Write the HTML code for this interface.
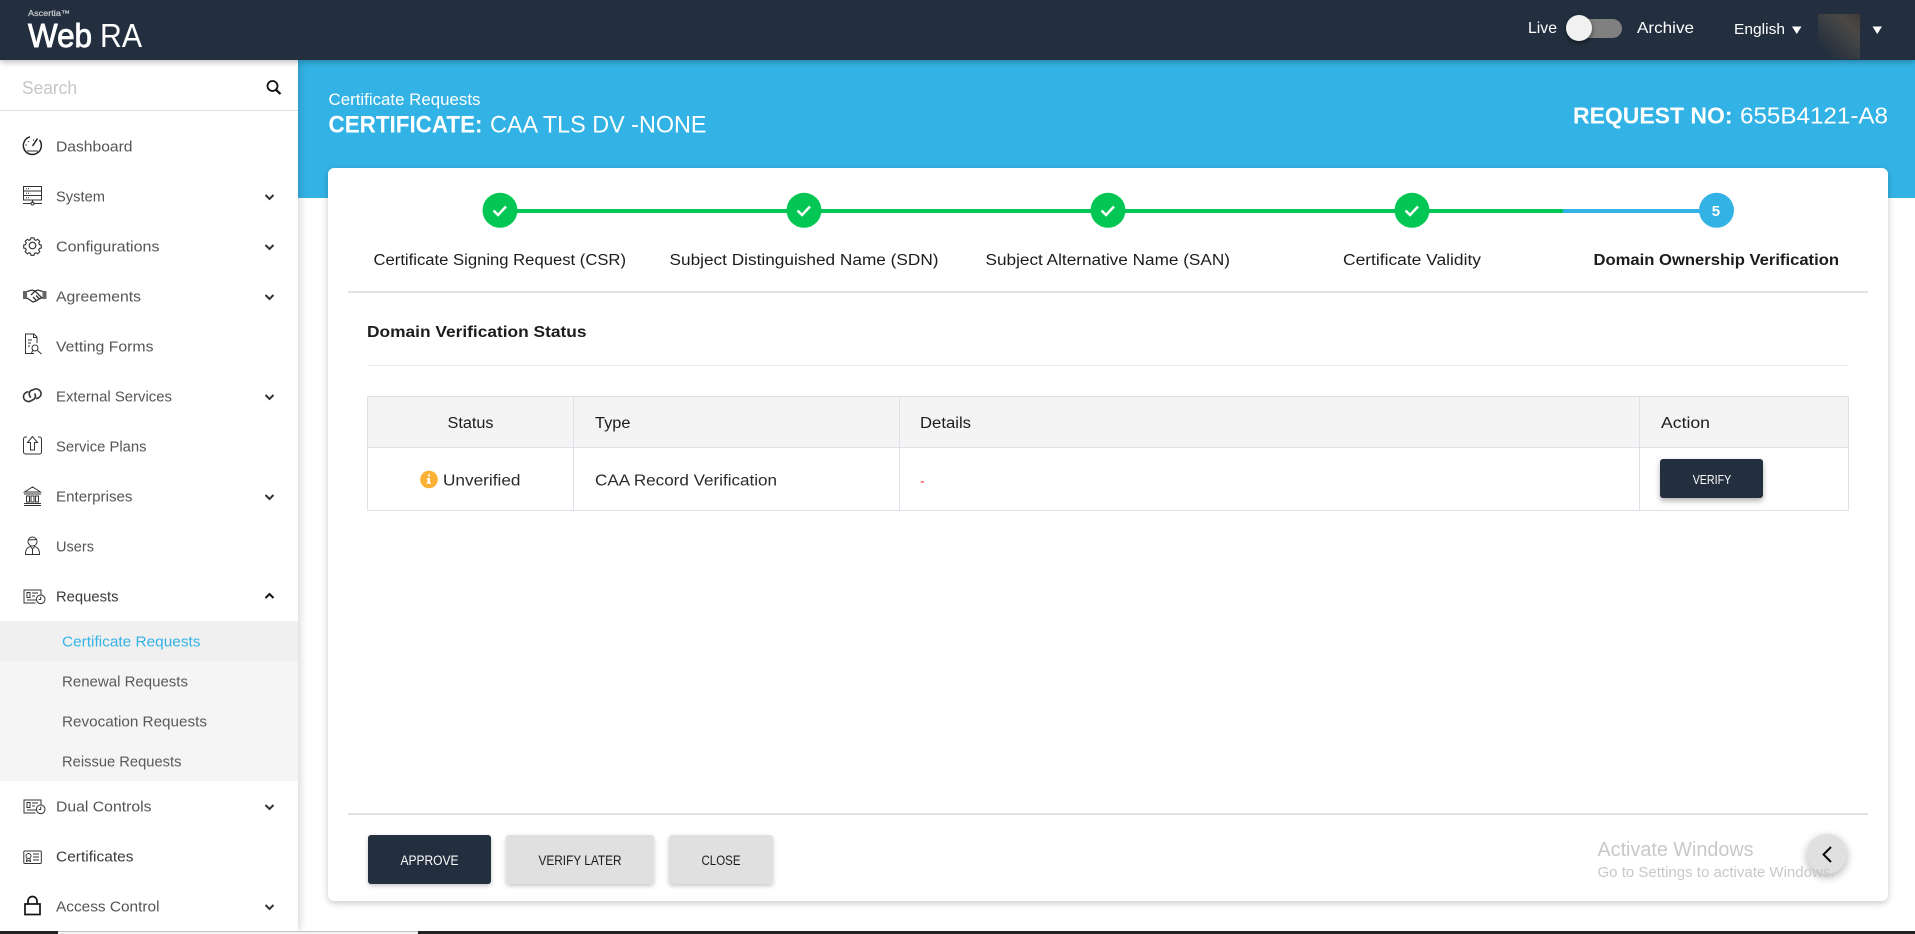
<!DOCTYPE html>
<html><head><meta charset="utf-8"><title>WebRA</title>
<style>
html,body{margin:0;padding:0;width:1915px;height:934px;overflow:hidden;background:#fff}
body{position:relative;font-family:"Liberation Sans",sans-serif}
.b{position:absolute}
svg{position:absolute;left:0;top:0}
text{font-family:"Liberation Sans",sans-serif}
.m{font-size:14.500px;fill:#555}
.s{font-size:14.500px;fill:#5a5a5a}
.w{fill:#fff}
.k{fill:#1c1c1c;font-size:15.500px}
.ic{fill:none;stroke:#333;stroke-width:1}
.ch{fill:none;stroke:#333;stroke-width:2}
</style></head><body>
<div class="b" style="left:298px;top:60px;width:1617px;height:138px;background:#33b3e5"></div>
<div class="b" style="left:0;top:60px;width:298px;height:871px;background:#fff;box-shadow:2px 0 8px rgba(0,0,0,.16)"></div>
<div class="b" style="left:0;top:0;width:1915px;height:60px;background:#232f3e;box-shadow:0 2px 6px rgba(0,0,0,.28)"></div>
<div class="b" style="left:0;top:110px;width:298px;height:1px;background:#dedede"></div>
<div class="b" style="left:0;top:621px;width:298px;height:160px;background:#f5f5f5"></div>
<div class="b" style="left:0;top:621px;width:298px;height:40px;background:#f0f0f0"></div>
<div class="b" style="left:328px;top:168px;width:1560px;height:733px;background:#fff;border-radius:6px;box-shadow:0 2px 7px rgba(0,0,0,.22)"></div>
<div class="b" style="left:348px;top:291px;width:1520px;height:2px;background:#dfe3e7"></div>
<div class="b" style="left:367px;top:365px;width:1482px;height:1px;background:#e9eaec"></div>
<div class="b" style="left:348px;top:813px;width:1520px;height:2px;background:#dfe3e7"></div>
<div class="b" style="left:367px;top:396px;width:1482px;height:51px;background:#f4f4f4"></div>
<div class="b" style="left:367px;top:396px;width:1482px;height:115px;border:1px solid #dfe1e8;box-sizing:border-box"></div>
<div class="b" style="left:367px;top:447px;width:1482px;height:1px;background:#dfe1e8"></div>
<div class="b" style="left:573px;top:396px;width:1px;height:115px;background:#dfe1e8"></div>
<div class="b" style="left:899px;top:396px;width:1px;height:115px;background:#dfe1e8"></div>
<div class="b" style="left:1639px;top:396px;width:1px;height:115px;background:#dfe1e8"></div>
<div class="b" style="left:1660px;top:459px;width:103px;height:39px;background:#232f3e;border-radius:3px;box-shadow:0 3px 6px rgba(0,0,0,.3)"></div>
<div class="b" style="left:368px;top:835px;width:123px;height:49px;background:#232f3e;border-radius:3px;box-shadow:0 2px 5px rgba(0,0,0,.22)"></div>
<div class="b" style="left:506px;top:835px;width:148px;height:49px;background:#e0e0e0;border-radius:3px;box-shadow:0 2px 5px rgba(0,0,0,.22)"></div>
<div class="b" style="left:669px;top:835px;width:104px;height:49px;background:#e0e0e0;border-radius:3px;box-shadow:0 2px 5px rgba(0,0,0,.22)"></div>
<div class="b" style="left:1807px;top:834px;width:40px;height:40px;border-radius:50%;background:#e0e0e0;box-shadow:0 3px 9px rgba(0,0,0,.3)"></div>
<div class="b" style="left:1570px;top:19px;width:52px;height:19px;border-radius:10px;background:#808080"></div>
<div class="b" style="left:1566px;top:15px;width:26px;height:26px;border-radius:50%;background:#f1f1f1;box-shadow:0 2px 5px rgba(0,0,0,.5)"></div>
<div class="b" style="left:1818px;top:14px;width:42px;height:45px;background:linear-gradient(45deg,#232f3e 15%,#4a4846 75%,#3f3a38)"></div>
<div class="b" style="left:0;top:931px;width:1915px;height:3px;background:#222"></div>
<div class="b" style="left:58px;top:931px;width:360px;height:3px;background:#f2f2f2;border-top:1px solid #c4c4c4;box-sizing:border-box"></div>

<svg width="1915" height="934" viewBox="0 0 1915 934" xmlns="http://www.w3.org/2000/svg">
<!-- logo -->
<text x="28" y="16" font-size="8" fill="#c9ccd0" stroke="#c9ccd0" stroke-width=".2" textLength="42" lengthAdjust="spacingAndGlyphs">Ascertia™</text>
<text x="28" y="47" font-size="33" class="w" stroke="#fff" stroke-width=".9" textLength="64" lengthAdjust="spacingAndGlyphs">Web</text>
<text x="100" y="47" font-size="33" class="w" textLength="42" lengthAdjust="spacingAndGlyphs">RA</text>
<!-- header right -->
<text x="1528" y="33" font-size="16" class="w" textLength="29" lengthAdjust="spacingAndGlyphs">Live</text>
<text x="1637" y="33" font-size="16" class="w" textLength="57" lengthAdjust="spacingAndGlyphs">Archive</text>
<text x="1734" y="34" font-size="15" class="w" textLength="51" lengthAdjust="spacingAndGlyphs">English</text>
<path d="M1792 26.500h9.500l-4.750 7.500z" fill="#fff"/>
<path d="M1872.500 26.500h9.500l-4.750 7.500z" fill="#fff"/>
<!-- banner -->
<text x="328.500" y="105" font-size="16.500" class="w" textLength="152" lengthAdjust="spacingAndGlyphs">Certificate Requests</text>
<text x="328.500" y="132.500" font-size="24" font-weight="bold" class="w" textLength="154" lengthAdjust="spacingAndGlyphs">CERTIFICATE:</text>
<text x="490" y="132.500" font-size="24" class="w" textLength="216.500" lengthAdjust="spacingAndGlyphs">CAA TLS DV -NONE</text>
<text x="1573" y="123.500" font-size="23" font-weight="bold" class="w" textLength="159.500" lengthAdjust="spacingAndGlyphs">REQUEST NO:</text>
<text x="1740" y="123.500" font-size="23" class="w" textLength="148" lengthAdjust="spacingAndGlyphs">655B4121-A8</text>
<!-- search -->
<text x="22" y="94" font-size="18" fill="#c6c6c6" textLength="55" lengthAdjust="spacingAndGlyphs">Search</text>
<circle cx="272.500" cy="86" r="5" fill="none" stroke="#111" stroke-width="1.800"/><path d="M276 89.800l4.500 4.300" stroke="#111" stroke-width="2.200" fill="none"/>
<!-- menu -->
<text class="m" x="56" y="151.500" textLength="76.500" lengthAdjust="spacingAndGlyphs">Dashboard</text>
<text class="m" x="56" y="201.500" textLength="49" lengthAdjust="spacingAndGlyphs">System</text>
<text class="m" x="56" y="251.500" textLength="103.500" lengthAdjust="spacingAndGlyphs">Configurations</text>
<text class="m" x="56" y="301.500" textLength="85" lengthAdjust="spacingAndGlyphs">Agreements</text>
<text class="m" x="56" y="351.500" textLength="97.500" lengthAdjust="spacingAndGlyphs">Vetting Forms</text>
<text class="m" x="56" y="401.500" textLength="116" lengthAdjust="spacingAndGlyphs">External Services</text>
<text class="m" x="56" y="451.500" textLength="90.500" lengthAdjust="spacingAndGlyphs">Service Plans</text>
<text class="m" x="56" y="501.500" textLength="76.500" lengthAdjust="spacingAndGlyphs">Enterprises</text>
<text class="m" x="56" y="551.500" textLength="38" lengthAdjust="spacingAndGlyphs">Users</text>
<text class="m" x="56" y="601.500" style="fill:#3a3a3a" textLength="62.500" lengthAdjust="spacingAndGlyphs">Requests</text>
<text class="s" x="62" y="646.500" style="fill:#33b3e5" textLength="138.500" lengthAdjust="spacingAndGlyphs">Certificate Requests</text>
<text class="s" x="62" y="686.500" textLength="126" lengthAdjust="spacingAndGlyphs">Renewal Requests</text>
<text class="s" x="62" y="726.500" textLength="145" lengthAdjust="spacingAndGlyphs">Revocation Requests</text>
<text class="s" x="62" y="766.500" textLength="119.500" lengthAdjust="spacingAndGlyphs">Reissue Requests</text>
<text class="m" x="56" y="811.500" textLength="95.500" lengthAdjust="spacingAndGlyphs">Dual Controls</text>
<text class="m" x="56" y="861.500" style="fill:#3a3a3a" textLength="77.500" lengthAdjust="spacingAndGlyphs">Certificates</text>
<text class="m" x="56" y="911.500" textLength="103.500" lengthAdjust="spacingAndGlyphs">Access Control</text>
<!-- chevrons -->
<g class="ch">
<path d="M265.500 195l4 4 4-4M265.500 245l4 4 4-4M265.500 295l4 4 4-4M265.500 395l4 4 4-4M265.500 495l4 4 4-4M265.500 805l4 4 4-4M265.500 905l4 4 4-4"/>
<path d="M265.500 598l4-4 4 4" stroke="#111"/>
</g>
<!-- icons -->
<g class="ic">
<!-- dashboard -->
<path d="M30 136.800a9 9 0 1 0 9.500 3.200" stroke-width="1.500" stroke="#222"/><path d="M32.500 146l5-7.500" stroke-width="1.500" stroke="#222"/><path d="M25.500 145h1.500M28 141l.8 1M33.500 139.500v1.200M27 151h11"/>
<!-- system -->
<rect x="23.500" y="186.500" width="18" height="4.500"/><rect x="23.500" y="191" width="18" height="4.500"/><rect x="23.500" y="195.500" width="18" height="4.500"/><path d="M32.500 200v3M23 203.500h7.500M34.500 203.500h7.500"/><circle cx="32.500" cy="203.500" r="1.500"/><path d="M26 188.700h4M26 193.200h4M26 197.700h4" stroke-dasharray="1 1"/>
<!-- gear -->
<circle cx="32.500" cy="245.500" r="3.300" stroke-width="1.200"/>
<path d="M30.500 236.500h4l.6 2.500 2 .9 2.300-1.400 2.800 2.800-1.400 2.300.9 2 2.500.6v4l-2.500.6-.9 2 1.400 2.300-2.800 2.800-2.300-1.400-2 .9-.6 2.500h-4l-.6-2.500-2-.9-2.300 1.400-2.800-2.800 1.400-2.300-.9-2-2.500-.6v-4l2.500-.6.9-2-1.400-2.300 2.800-2.800 2.300 1.400 2-.9z" transform="translate(8.100 60.400) scale(.75)" stroke-width="1.500"/>
<!-- handshake -->
<path d="M23 291h4v8h-4zM42.500 291h4v8h-4z" fill="#666" stroke="none"/><path d="M27 291.500l5-1.500 3 1 3-1 4.500 1.500M27 298l6 4 3-1 3-2 3.500-1.500M31 295l4-4 7 7M33 297l3 3M36 295.500l3 3" stroke-width="1.300"/>
<!-- vetting -->
<path d="M37 343v-6l-3-3h-8.500v19.500H34M33.500 334v3.500H37M28 340h4M28 343h3M28 346h2"/><circle cx="35" cy="348" r="3"/><path d="M37.500 350.500l4 3.500M33 350l-1.500 3"/>
<!-- external -->
<path d="M31 397.500a4 4 0 0 1-1-1l-.5-1a4.500 4.500 0 0 1 1.500-5l4-1.500a5 5 0 0 1 6 5.500 5 5 0 0 1-3 3.500l-2 .8" stroke-width="1.600"/><path d="M34.500 393.500a4.500 4.500 0 0 1 1 3 4.500 4.500 0 0 1-2 3l-3.500 1.800a5 5 0 0 1-6.500-5 5 5 0 0 1 3-4l2-.8" stroke-width="1.600"/>
<!-- service plans -->
<path d="M27 437h-1.500a2 2 0 0 0-2 2v13a2 2 0 0 0 2 2h14a2 2 0 0 0 2-2v-13a2 2 0 0 0-2-2H38"/><path d="M32.500 436.500l-5 6h3v7.500h4v-7.500h3z"/>
<!-- bank -->
<path d="M24.500 492l8-5 8 5zM24 494h17M24 503.500h17M24 505.500h17M26.500 496h3v6h-3zM31 496h3v6h-3zM35.500 496h3v6h-3z"/>
<!-- users -->
<circle cx="32.500" cy="541.500" r="4.500"/><path d="M28 540l9-.5M25.500 554.500c0-5 1.500-7 5-8l2 2.500 2-2.500c3.500 1 5 3 5 8zM32.500 549v5.500"/>
<!-- requests -->
<path d="M35.500 603H24v-13h17v5M27 592.500h3v5h-3zM27 600h10M32 593h6M32 596h3"/><circle cx="40.700" cy="599.300" r="4.300"/><path d="M40.700 596.800v2.700h-2"/>
<!-- dual -->
<path d="M35.500 813H24v-13h17v5M27 802.500h3v5h-3zM27 810h10M32 803h6M32 806h3"/><circle cx="40.700" cy="809.300" r="4.300"/><path d="M40.700 806.800v2.700h-2"/>
<!-- certificates -->
<rect x="23.800" y="851" width="17.500" height="12.500" rx="1"/><circle cx="28.500" cy="856" r="2.500"/><path d="M27 858.500l-.5 3 2-1 2 1-.5-3M33 854h6M33 857h6M33 860h6"/>
<!-- lock -->
<rect x="25" y="904" width="15" height="10.500" stroke-width="1.700" stroke="#111"/><path d="M28 904v-3a4.500 4.500 0 0 1 9 0v3" stroke-width="1.700" stroke="#111"/>
</g>
<!-- stepper -->
<rect x="500" y="209" width="1064" height="4" fill="#03c655"/>
<rect x="1563" y="209" width="153" height="4" fill="#33b3e5"/>
<g fill="#03c655"><circle cx="500" cy="210.300" r="17.500"/><circle cx="804" cy="210.300" r="17.500"/><circle cx="1108" cy="210.300" r="17.500"/><circle cx="1412" cy="210.300" r="17.500"/></g>
<circle cx="1716.500" cy="210.300" r="17.500" fill="#33b3e5"/>
<g fill="none" stroke="#fff" stroke-width="2.400"><path d="M493.500 210.500l4.500 4.500 8-8.500"/><path d="M797.500 210.500l4.500 4.500 8-8.500"/><path d="M1101.500 210.500l4.500 4.500 8-8.500"/><path d="M1405.500 210.500l4.500 4.500 8-8.500"/></g>
<text x="1711.700" y="216" font-size="15" font-weight="bold" class="w">5</text>
<text class="k" x="373.500" y="265" textLength="252.500" lengthAdjust="spacingAndGlyphs">Certificate Signing Request (CSR)</text>
<text class="k" x="669.500" y="265" textLength="269" lengthAdjust="spacingAndGlyphs">Subject Distinguished Name (SDN)</text>
<text class="k" x="985.500" y="265" textLength="244.500" lengthAdjust="spacingAndGlyphs">Subject Alternative Name (SAN)</text>
<text class="k" x="1343" y="265" textLength="138" lengthAdjust="spacingAndGlyphs">Certificate Validity</text>
<text class="k" x="1593.500" y="265" font-weight="bold" textLength="245.500" lengthAdjust="spacingAndGlyphs">Domain Ownership Verification</text>
<!-- section -->
<text class="k" x="367" y="337" font-weight="bold" textLength="219.500" lengthAdjust="spacingAndGlyphs">Domain Verification Status</text>
<!-- table -->
<text class="k" x="447.500" y="428" textLength="46" lengthAdjust="spacingAndGlyphs">Status</text>
<text class="k" x="595" y="428" textLength="35.500" lengthAdjust="spacingAndGlyphs">Type</text>
<text class="k" x="920" y="428" textLength="51" lengthAdjust="spacingAndGlyphs">Details</text>
<text class="k" x="1661" y="428" textLength="49" lengthAdjust="spacingAndGlyphs">Action</text>
<circle cx="429" cy="479.500" r="8.800" fill="#fcb034"/>
<path d="M428 474.500h2v2h-2zM427.500 478h2.500v4.500h1v1.200h-4.500v-1.200h1v-3.300h-1z" fill="#fff"/>
<text class="k" x="443" y="485.500" style="fill:#2a2a2a" textLength="77.500" lengthAdjust="spacingAndGlyphs">Unverified</text>
<text class="k" x="595" y="485.500" style="fill:#2a2a2a" textLength="182" lengthAdjust="spacingAndGlyphs">CAA Record Verification</text>
<text x="920" y="485.500" font-size="14" fill="#f0243a">-</text>
<text x="1692.700" y="484" font-size="12.500" class="w" textLength="38.500" lengthAdjust="spacingAndGlyphs">VERIFY</text>
<!-- footer buttons -->
<text x="400.500" y="865" font-size="13.500" class="w" textLength="58" lengthAdjust="spacingAndGlyphs">APPROVE</text>
<text x="538.500" y="865" font-size="13.500" fill="#1c1c1c" textLength="83" lengthAdjust="spacingAndGlyphs">VERIFY LATER</text>
<text x="701.500" y="865" font-size="13.500" fill="#1c1c1c" textLength="39" lengthAdjust="spacingAndGlyphs">CLOSE</text>
<path d="M1831 847l-7.500 7.500 7.500 7.500" fill="none" stroke="#0a0a0a" stroke-width="2"/>
<!-- watermark -->
<text x="1597.500" y="856" font-size="20" fill="#c8c8c8" textLength="156" lengthAdjust="spacingAndGlyphs">Activate Windows</text>
<text x="1597.500" y="877" font-size="14.500" fill="#c8c8c8" textLength="237" lengthAdjust="spacingAndGlyphs">Go to Settings to activate Windows.</text>
</svg>
</body></html>
